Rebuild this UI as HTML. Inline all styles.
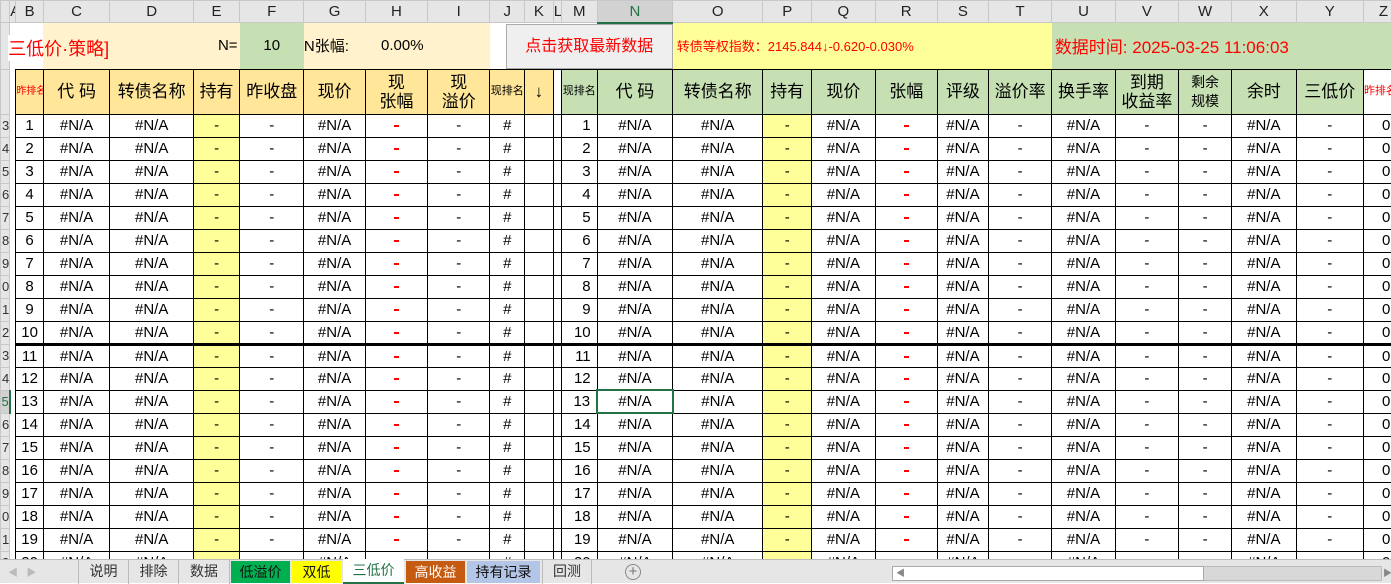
<!DOCTYPE html>
<html><head><meta charset="utf-8"><style>
*{margin:0;padding:0;box-sizing:border-box}
body{width:1391px;height:583px;overflow:hidden;background:#fff;font-family:"Liberation Sans","Noto Sans CJK SC",sans-serif;position:relative}
table{border-collapse:collapse;table-layout:fixed;position:absolute;left:0;top:0;width:1404px}
td{overflow:hidden;white-space:nowrap;text-align:center;font-size:15px;color:#000;padding:0;border:1px solid #000}
tr.ch td{height:22px;background:#e6e6e6;border:1px solid #c8c8c8;font-size:15px;color:#222}
tr.ch td.sel{background:#d2d2d2;border-bottom:2px solid #217346;color:#217346}
tr.t td{height:45px;border:none;background:#fff2cc}
tr.h td{height:45px;font-size:17px;line-height:19px}
tr.d td{height:23px}
td.rh{background:#e6e6e6!important;border:1px solid #c8c8c8!important;text-align:right;font-size:13px;color:#333;direction:rtl}
td.y{background:#ffff99}
td.l{border-left:1px solid #000;border-right:1px solid #000}
td.m{text-align:right;padding-right:6px}
.r{display:inline-block;width:5px;height:2px;background:#f00;vertical-align:middle}
tr.hv td{border-bottom:3px solid #000}
.g{background:#ffe699}.gr{background:#c6e0b4}
.red{color:#f00}
</style></head><body>
<table>
<colgroup>
<col style="width:9px"><col style="width:6px"><col style="width:27px"><col style="width:65px"><col style="width:82px"><col style="width:45px"><col style="width:63px"><col style="width:60px"><col style="width:61px"><col style="width:61px"><col style="width:34px"><col style="width:28px"><col style="width:8px"><col style="width:35px"><col style="width:74px"><col style="width:88px"><col style="width:48px"><col style="width:62px"><col style="width:61px"><col style="width:50px"><col style="width:62px"><col style="width:62px"><col style="width:62px"><col style="width:52px"><col style="width:63px"><col style="width:66px"><col style="width:39px">
</colgroup>
<tr class="ch"><td></td><td>A</td><td>B</td><td>C</td><td>D</td><td>E</td><td>F</td><td>G</td><td>H</td><td>I</td><td>J</td><td>K</td><td>L</td><td>M</td><td class="sel">N</td><td>O</td><td>P</td><td>Q</td><td>R</td><td>S</td><td>T</td><td>U</td><td>V</td><td>W</td><td>X</td><td>Y</td><td>Z</td></tr>
<tr class="t"><td class="rh"></td><td colspan="2" style="background:#fff;text-align:left;color:#f00;font-size:18px;overflow:visible;position:relative"><span style="position:absolute;left:-2px;top:12px;background:linear-gradient(90deg,#fff 0,#fff 35px,#fff2cc 35px)">三低价·策略]</span></td><td colspan="2"></td><td style="text-align:right;font-size:15px;padding-right:2px">N=</td><td style="background:#c6e0b4;font-size:15px">10</td><td style="text-align:left;font-size:15px">N张幅:</td><td style="font-size:15px;text-align:right;padding-right:4px">0.00%</td><td></td><td colspan="5" style="background:#fff;padding:0"><div style="margin-left:16px;height:45px;background:#efefef;border:1px solid #aaa;color:#f00;font-size:16px;line-height:43px;text-align:center">点击获取最新数据</div></td><td colspan="6" style="background:#ffff99;text-align:left;color:#f00;font-size:13px;padding-left:4px">转债等权指数：2145.844↓-0.620-0.030%</td><td colspan="6" style="background:#c6e0b4;text-align:left;color:#f00;font-size:17px;padding-left:3px">数据时间: 2025-03-25 11:06:03</td></tr>
<tr class="h"><td class="rh"></td><td style="border:none"></td><td class="g red" style="font-size:10px">昨排名</td><td class="g">代 码</td><td class="g">转债名称</td><td class="g">持有</td><td class="g">昨收盘</td><td class="g">现价</td><td class="g">现<br>张幅</td><td class="g">现<br>溢价</td><td class="g" style="font-size:11px">现排名</td><td class="g">↓</td><td class="l"></td><td class="gr" style="font-size:11px">现排名</td><td class="gr">代 码</td><td class="gr">转债名称</td><td class="gr">持有</td><td class="gr">现价</td><td class="gr">张幅</td><td class="gr">评级</td><td class="gr">溢价率</td><td class="gr">换手率</td><td class="gr">到期<br>收益率</td><td class="gr" style="font-size:14px">剩余<br>规模</td><td class="gr">余时</td><td class="gr">三低价</td><td class="red" style="font-size:11px;text-align:left">昨排名</td></tr>
<tr class="d"><td class="rh">3</td><td style="border:none"></td><td>1</td><td>#N/A</td><td>#N/A</td><td class="y">-</td><td>-</td><td>#N/A</td><td><span class="r"></span></td><td>-</td><td>#</td><td></td><td class="l"></td><td class="m">1</td><td>#N/A</td><td>#N/A</td><td class="y">-</td><td>#N/A</td><td><span class="r"></span></td><td>#N/A</td><td>-</td><td>#N/A</td><td>-</td><td>-</td><td>#N/A</td><td>-</td><td style="text-align:left;padding-left:18px">0</td></tr>
<tr class="d"><td class="rh">4</td><td style="border:none"></td><td>2</td><td>#N/A</td><td>#N/A</td><td class="y">-</td><td>-</td><td>#N/A</td><td><span class="r"></span></td><td>-</td><td>#</td><td></td><td class="l"></td><td class="m">2</td><td>#N/A</td><td>#N/A</td><td class="y">-</td><td>#N/A</td><td><span class="r"></span></td><td>#N/A</td><td>-</td><td>#N/A</td><td>-</td><td>-</td><td>#N/A</td><td>-</td><td style="text-align:left;padding-left:18px">0</td></tr>
<tr class="d"><td class="rh">5</td><td style="border:none"></td><td>3</td><td>#N/A</td><td>#N/A</td><td class="y">-</td><td>-</td><td>#N/A</td><td><span class="r"></span></td><td>-</td><td>#</td><td></td><td class="l"></td><td class="m">3</td><td>#N/A</td><td>#N/A</td><td class="y">-</td><td>#N/A</td><td><span class="r"></span></td><td>#N/A</td><td>-</td><td>#N/A</td><td>-</td><td>-</td><td>#N/A</td><td>-</td><td style="text-align:left;padding-left:18px">0</td></tr>
<tr class="d"><td class="rh">6</td><td style="border:none"></td><td>4</td><td>#N/A</td><td>#N/A</td><td class="y">-</td><td>-</td><td>#N/A</td><td><span class="r"></span></td><td>-</td><td>#</td><td></td><td class="l"></td><td class="m">4</td><td>#N/A</td><td>#N/A</td><td class="y">-</td><td>#N/A</td><td><span class="r"></span></td><td>#N/A</td><td>-</td><td>#N/A</td><td>-</td><td>-</td><td>#N/A</td><td>-</td><td style="text-align:left;padding-left:18px">0</td></tr>
<tr class="d"><td class="rh">7</td><td style="border:none"></td><td>5</td><td>#N/A</td><td>#N/A</td><td class="y">-</td><td>-</td><td>#N/A</td><td><span class="r"></span></td><td>-</td><td>#</td><td></td><td class="l"></td><td class="m">5</td><td>#N/A</td><td>#N/A</td><td class="y">-</td><td>#N/A</td><td><span class="r"></span></td><td>#N/A</td><td>-</td><td>#N/A</td><td>-</td><td>-</td><td>#N/A</td><td>-</td><td style="text-align:left;padding-left:18px">0</td></tr>
<tr class="d"><td class="rh">8</td><td style="border:none"></td><td>6</td><td>#N/A</td><td>#N/A</td><td class="y">-</td><td>-</td><td>#N/A</td><td><span class="r"></span></td><td>-</td><td>#</td><td></td><td class="l"></td><td class="m">6</td><td>#N/A</td><td>#N/A</td><td class="y">-</td><td>#N/A</td><td><span class="r"></span></td><td>#N/A</td><td>-</td><td>#N/A</td><td>-</td><td>-</td><td>#N/A</td><td>-</td><td style="text-align:left;padding-left:18px">0</td></tr>
<tr class="d"><td class="rh">9</td><td style="border:none"></td><td>7</td><td>#N/A</td><td>#N/A</td><td class="y">-</td><td>-</td><td>#N/A</td><td><span class="r"></span></td><td>-</td><td>#</td><td></td><td class="l"></td><td class="m">7</td><td>#N/A</td><td>#N/A</td><td class="y">-</td><td>#N/A</td><td><span class="r"></span></td><td>#N/A</td><td>-</td><td>#N/A</td><td>-</td><td>-</td><td>#N/A</td><td>-</td><td style="text-align:left;padding-left:18px">0</td></tr>
<tr class="d"><td class="rh">0</td><td style="border:none"></td><td>8</td><td>#N/A</td><td>#N/A</td><td class="y">-</td><td>-</td><td>#N/A</td><td><span class="r"></span></td><td>-</td><td>#</td><td></td><td class="l"></td><td class="m">8</td><td>#N/A</td><td>#N/A</td><td class="y">-</td><td>#N/A</td><td><span class="r"></span></td><td>#N/A</td><td>-</td><td>#N/A</td><td>-</td><td>-</td><td>#N/A</td><td>-</td><td style="text-align:left;padding-left:18px">0</td></tr>
<tr class="d"><td class="rh">1</td><td style="border:none"></td><td>9</td><td>#N/A</td><td>#N/A</td><td class="y">-</td><td>-</td><td>#N/A</td><td><span class="r"></span></td><td>-</td><td>#</td><td></td><td class="l"></td><td class="m">9</td><td>#N/A</td><td>#N/A</td><td class="y">-</td><td>#N/A</td><td><span class="r"></span></td><td>#N/A</td><td>-</td><td>#N/A</td><td>-</td><td>-</td><td>#N/A</td><td>-</td><td style="text-align:left;padding-left:18px">0</td></tr>
<tr class="d hv"><td class="rh">2</td><td style="border:none"></td><td>10</td><td>#N/A</td><td>#N/A</td><td class="y">-</td><td>-</td><td>#N/A</td><td><span class="r"></span></td><td>-</td><td>#</td><td></td><td class="l"></td><td class="m">10</td><td>#N/A</td><td>#N/A</td><td class="y">-</td><td>#N/A</td><td><span class="r"></span></td><td>#N/A</td><td>-</td><td>#N/A</td><td>-</td><td>-</td><td>#N/A</td><td>-</td><td style="text-align:left;padding-left:18px">0</td></tr>
<tr class="d"><td class="rh">3</td><td style="border:none"></td><td>11</td><td>#N/A</td><td>#N/A</td><td class="y">-</td><td>-</td><td>#N/A</td><td><span class="r"></span></td><td>-</td><td>#</td><td></td><td class="l"></td><td class="m">11</td><td>#N/A</td><td>#N/A</td><td class="y">-</td><td>#N/A</td><td><span class="r"></span></td><td>#N/A</td><td>-</td><td>#N/A</td><td>-</td><td>-</td><td>#N/A</td><td>-</td><td style="text-align:left;padding-left:18px">0</td></tr>
<tr class="d"><td class="rh">4</td><td style="border:none"></td><td>12</td><td>#N/A</td><td>#N/A</td><td class="y">-</td><td>-</td><td>#N/A</td><td><span class="r"></span></td><td>-</td><td>#</td><td></td><td class="l"></td><td class="m">12</td><td>#N/A</td><td>#N/A</td><td class="y">-</td><td>#N/A</td><td><span class="r"></span></td><td>#N/A</td><td>-</td><td>#N/A</td><td>-</td><td>-</td><td>#N/A</td><td>-</td><td style="text-align:left;padding-left:18px">0</td></tr>
<tr class="d"><td class="rh" style="background:#d2d2d2!important;color:#217346;border-right:2px solid #217346!important">5</td><td style="border:none"></td><td>13</td><td>#N/A</td><td>#N/A</td><td class="y">-</td><td>-</td><td>#N/A</td><td><span class="r"></span></td><td>-</td><td>#</td><td></td><td class="l"></td><td class="m">13</td><td style="border:2px solid #217346">#N/A</td><td>#N/A</td><td class="y">-</td><td>#N/A</td><td><span class="r"></span></td><td>#N/A</td><td>-</td><td>#N/A</td><td>-</td><td>-</td><td>#N/A</td><td>-</td><td style="text-align:left;padding-left:18px">0</td></tr>
<tr class="d"><td class="rh">6</td><td style="border:none"></td><td>14</td><td>#N/A</td><td>#N/A</td><td class="y">-</td><td>-</td><td>#N/A</td><td><span class="r"></span></td><td>-</td><td>#</td><td></td><td class="l"></td><td class="m">14</td><td>#N/A</td><td>#N/A</td><td class="y">-</td><td>#N/A</td><td><span class="r"></span></td><td>#N/A</td><td>-</td><td>#N/A</td><td>-</td><td>-</td><td>#N/A</td><td>-</td><td style="text-align:left;padding-left:18px">0</td></tr>
<tr class="d"><td class="rh">7</td><td style="border:none"></td><td>15</td><td>#N/A</td><td>#N/A</td><td class="y">-</td><td>-</td><td>#N/A</td><td><span class="r"></span></td><td>-</td><td>#</td><td></td><td class="l"></td><td class="m">15</td><td>#N/A</td><td>#N/A</td><td class="y">-</td><td>#N/A</td><td><span class="r"></span></td><td>#N/A</td><td>-</td><td>#N/A</td><td>-</td><td>-</td><td>#N/A</td><td>-</td><td style="text-align:left;padding-left:18px">0</td></tr>
<tr class="d"><td class="rh">8</td><td style="border:none"></td><td>16</td><td>#N/A</td><td>#N/A</td><td class="y">-</td><td>-</td><td>#N/A</td><td><span class="r"></span></td><td>-</td><td>#</td><td></td><td class="l"></td><td class="m">16</td><td>#N/A</td><td>#N/A</td><td class="y">-</td><td>#N/A</td><td><span class="r"></span></td><td>#N/A</td><td>-</td><td>#N/A</td><td>-</td><td>-</td><td>#N/A</td><td>-</td><td style="text-align:left;padding-left:18px">0</td></tr>
<tr class="d"><td class="rh">9</td><td style="border:none"></td><td>17</td><td>#N/A</td><td>#N/A</td><td class="y">-</td><td>-</td><td>#N/A</td><td><span class="r"></span></td><td>-</td><td>#</td><td></td><td class="l"></td><td class="m">17</td><td>#N/A</td><td>#N/A</td><td class="y">-</td><td>#N/A</td><td><span class="r"></span></td><td>#N/A</td><td>-</td><td>#N/A</td><td>-</td><td>-</td><td>#N/A</td><td>-</td><td style="text-align:left;padding-left:18px">0</td></tr>
<tr class="d"><td class="rh">0</td><td style="border:none"></td><td>18</td><td>#N/A</td><td>#N/A</td><td class="y">-</td><td>-</td><td>#N/A</td><td><span class="r"></span></td><td>-</td><td>#</td><td></td><td class="l"></td><td class="m">18</td><td>#N/A</td><td>#N/A</td><td class="y">-</td><td>#N/A</td><td><span class="r"></span></td><td>#N/A</td><td>-</td><td>#N/A</td><td>-</td><td>-</td><td>#N/A</td><td>-</td><td style="text-align:left;padding-left:18px">0</td></tr>
<tr class="d"><td class="rh">1</td><td style="border:none"></td><td>19</td><td>#N/A</td><td>#N/A</td><td class="y">-</td><td>-</td><td>#N/A</td><td><span class="r"></span></td><td>-</td><td>#</td><td></td><td class="l"></td><td class="m">19</td><td>#N/A</td><td>#N/A</td><td class="y">-</td><td>#N/A</td><td><span class="r"></span></td><td>#N/A</td><td>-</td><td>#N/A</td><td>-</td><td>-</td><td>#N/A</td><td>-</td><td style="text-align:left;padding-left:18px">0</td></tr>
<tr class="d"><td class="rh">2</td><td style="border:none"></td><td>20</td><td>#N/A</td><td>#N/A</td><td class="y">-</td><td>-</td><td>#N/A</td><td><span class="r"></span></td><td>-</td><td>#</td><td></td><td class="l"></td><td class="m">20</td><td>#N/A</td><td>#N/A</td><td class="y">-</td><td>#N/A</td><td><span class="r"></span></td><td>#N/A</td><td>-</td><td>#N/A</td><td>-</td><td>-</td><td>#N/A</td><td>-</td><td style="text-align:left;padding-left:18px">0</td></tr>
</table>
<div style="position:absolute;left:0;top:559px;width:1391px;height:24px;background:#e6e6e6;border-top:1px solid #bbb;font-size:14px;color:#333">
<span style="position:absolute;left:8px;top:4px;color:#bbb;font-size:10px">◀ &nbsp; ▶</span>
<div style="position:absolute;left:78px;top:0;height:24px;width:50px;border-left:1px solid #bbb;text-align:center;line-height:23px">说明</div>
<div style="position:absolute;left:128px;top:0;height:24px;width:50px;border-left:1px solid #bbb;text-align:center;line-height:23px">排除</div>
<div style="position:absolute;left:178px;top:0;height:24px;width:52px;border-left:1px solid #bbb;border-right:1px solid #bbb;text-align:center;line-height:23px">数据</div>
<div style="position:absolute;left:231px;top:1px;height:22px;width:59px;background:#00b050;text-align:center;line-height:22px;color:#111">低溢价</div>
<div style="position:absolute;left:292px;top:1px;height:22px;width:49px;background:#ffff00;text-align:center;line-height:22px;color:#111">双低</div>
<div style="position:absolute;left:343px;top:-1px;height:25px;width:61px;background:#fff;text-align:center;line-height:23px;color:#217346;border-bottom:2px solid #217346">三低价</div>
<div style="position:absolute;left:406px;top:1px;height:22px;width:59px;background:#c55a11;text-align:center;line-height:22px;color:#fff">高收益</div>
<div style="position:absolute;left:467px;top:1px;height:22px;width:73px;background:#b4c6e7;text-align:center;line-height:22px;color:#111">持有记录</div>
<div style="position:absolute;left:542px;top:0;height:24px;width:50px;border-left:1px solid #bbb;border-right:1px solid #bbb;text-align:center;line-height:23px">回测</div>
<div style="position:absolute;left:625px;top:4px;width:16px;height:16px;border:1px solid #888;border-radius:50%;text-align:center;line-height:13px;color:#777;font-size:15px">+</div>
<div style="position:absolute;left:892px;top:6px;width:490px;height:15px;background:#d8d8d8;border:1px solid #bbb"></div>
<div style="position:absolute;left:892px;top:6px;width:312px;height:15px;background:#fff;border:1px solid #aaa;font-size:9px;color:#888;line-height:13px;padding-left:3px">◀</div>
<div style="position:absolute;left:1383px;top:6px;font-size:9px;color:#888">▶</div>
</div>
</body></html>
